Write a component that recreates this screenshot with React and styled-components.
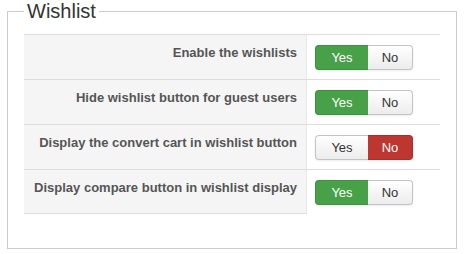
import styled, { createGlobalStyle } from "styled-components";

const GlobalStyle = createGlobalStyle`
  body {
    margin: 0;
    background: #fff;
    font-family: "Liberation Sans", Arial, sans-serif;
  }
`;

// Cadre autour de la section
const StyledFieldset = styled.fieldset`
  box-sizing: border-box;
  width: 450px;
  min-width: 0;
  margin: 1px 7px 0;
  padding: 13px 16px 34px;
  border: 1px solid #cccccc;
`;

const StyledLegend = styled.legend`
  padding: 0 3px;
  font-size: 20px;
  line-height: 20px;
  color: #333333;
`;

const StyledOptions = styled.div`
  display: flex;
  flex-direction: column;
`;

const StyledRow = styled.div`
  display: grid;
  grid-template-columns: 283px 1fr;
  border-top: 1px solid #dddddd;

  &:last-child > div:first-child {
    border-bottom: 1px solid #dddddd;
  }
`;

const StyledLabel = styled.div`
  box-sizing: border-box;
  height: 44px;
  padding: 9px 9px 0 0;
  background: #f5f5f5;
  border-right: 1px solid #e8e8e8;
  font-size: 13px;
  font-weight: bold;
  line-height: 18px;
  color: #555555;
  text-align: right;
  white-space: nowrap;
`;

const StyledValue = styled.div`
  padding: 10px 0 0 8px;
`;

const StyledGroup = styled.div`
  display: inline-flex;
  border-radius: 4px;
  box-shadow: 0 1px 2px rgba(0, 0, 0, 0.08);
`;

const colours = {
  yes: { bg: "#48a148", border: "#3f913f", text: "#ffffff" },
  no: { bg: "#bd362f", border: "#a8302a", text: "#ffffff" },
};

const StyledButton = styled.span`
  box-sizing: border-box;
  width: ${(p) => p.$w}px;
  height: 25px;
  font-size: 13px;
  line-height: 23px;
  text-align: center;
  border: 1px solid ${(p) => (p.$active ? colours[p.$kind].border : "#c4c4c4")};
  background: ${(p) =>
    p.$active
      ? colours[p.$kind].bg
      : "linear-gradient(to bottom, #ffffff, #ececec)"};
  color: ${(p) => (p.$active ? colours[p.$kind].text : "#333333")};

  &:first-child {
    border-radius: 4px 0 0 4px;
    border-right: none;
  }

  &:last-child {
    border-radius: 0 4px 4px 0;
    border-left: none;
  }
`;

const Toggle = ({ value }) => (
  <StyledGroup>
    <StyledButton $w={53} $kind="yes" $active={value}>
      Yes
    </StyledButton>
    <StyledButton $w={45} $kind="no" $active={!value}>
      No
    </StyledButton>
  </StyledGroup>
);

const options = [
  { label: "Enable the wishlists", value: true },
  { label: "Hide wishlist button for guest users", value: true },
  { label: "Display the convert cart in wishlist button", value: false },
  { label: "Display compare button in wishlist display", value: true },
];

const App = () => (
  <>
    <GlobalStyle />
    <StyledFieldset>
      <StyledLegend>Wishlist</StyledLegend>
      <StyledOptions>
        {options.map((o) => (
          <StyledRow key={o.label}>
            <StyledLabel>{o.label}</StyledLabel>
            <StyledValue>
              <Toggle value={o.value} />
            </StyledValue>
          </StyledRow>
        ))}
      </StyledOptions>
    </StyledFieldset>
  </>
);

export default App;
